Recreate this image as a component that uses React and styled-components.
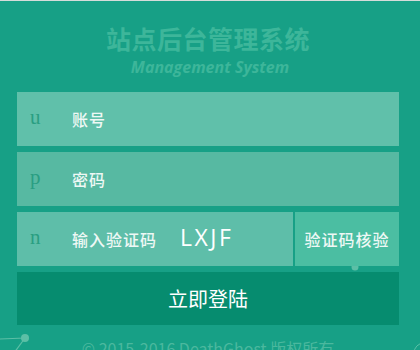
import React from 'react';
import styled, { createGlobalStyle } from 'styled-components';

const GlobalStyle = createGlobalStyle`
	html, body {
		margin: 0;
		padding: 0;
		height: 350px;
		overflow: hidden;
		background: #17a086;
	}
	* {
		box-sizing: border-box;
	}
`;

const Page = styled.div`
	position: relative;
	height: 350px;
	border-top: 1px solid #d6dcda;
	background: #17a086;
	padding: 22px 21px 0 17px;
	font-family: 'Noto Sans CJK SC', 'Noto Sans', sans-serif;
	overflow: hidden;
`;

const Header = styled.div`
	display: flex;
	flex-direction: column;
	align-items: center;
	height: 69px;
`;

const Title = styled.h1`
	margin: 0;
	font-size: 25px;
	line-height: 30px;
	font-weight: 700;
	color: #3db69a;
	letter-spacing: 0.5px;
`;

const Subtitle = styled.div`
	margin-top: 4px;
	font-family: 'Open Sans', 'Noto Sans', sans-serif;
	font-style: italic;
	font-weight: 700;
	font-size: 16px;
	line-height: 20px;
	color: #3db69a;
	padding-left: 4px;
`;

const Form = styled.div`
	position: relative;
	z-index: 1;
	display: flex;
	flex-direction: column;
	gap: 6.5px;
`;

const Row = styled.div`
	display: flex;
	gap: 2px;
	height: 53.5px;
`;

const Field = styled.div`
	flex: 1;
	display: flex;
	align-items: center;
	background: ${(p) => p.$bg || '#5ebea9'};
	padding-left: 13px;
`;

const Icon = styled.span`
	width: 42px;
	font-family: 'Liberation Serif', serif;
	font-size: 21px;
	color: #2a9e82;
	line-height: 1;
	margin-top: -2px;
`;

const Placeholder = styled.span`
	font-size: 16px;
	font-weight: 500;
	letter-spacing: 1px;
	color: #eef8f5;
`;

const Captcha = styled.span`
	margin-left: 23px;
	font-family: 'Open Sans', 'Liberation Sans', sans-serif;
	font-size: 23px;
	letter-spacing: 2.5px;
	color: #ffffff;
	margin-top: -3px;
`;

const VerifyButton = styled.button`
	width: 104px;
	border: none;
	background: #4bbea2;
	color: #eef8f5;
	font-family: 'Noto Sans CJK SC', sans-serif;
	font-size: 16px;
	font-weight: 500;
	letter-spacing: 1px;
	padding: 0;
	cursor: pointer;
`;

const LoginButton = styled.button`
	height: 53px;
	border: none;
	background: #068c6f;
	color: #ffffff;
	font-family: 'Noto Sans CJK SC', sans-serif;
	font-size: 20px;
	cursor: pointer;
`;

const Footer = styled.div`
	margin-top: 11px;
	text-align: center;
	font-size: 16px;
	color: #4bb89e;
`;

const Particles = styled.svg`
	position: absolute;
	left: 0;
	top: 0;
	width: 420px;
	height: 350px;
	pointer-events: none;
`;

const App = () => {
	return (
		<>
			<GlobalStyle />
			<Page>
				<Particles viewBox='0 0 420 350'>
					<line x1='0' y1='338' x2='25' y2='337' stroke='#5cbfa6' strokeWidth='1.2' />
					<line x1='25' y1='337' x2='14' y2='352' stroke='#5cbfa6' strokeWidth='1.2' />
					<circle cx='25' cy='337' r='4' fill='#5cbfa6' />
					<circle cx='355' cy='266' r='3.5' fill='#5cbfa6' />
					<circle cx='424' cy='352' r='10' fill='none' stroke='#5cbfa6' strokeWidth='1' />
				</Particles>
				<Header>
					<Title>站点后台管理系统</Title>
					<Subtitle>Management System</Subtitle>
				</Header>
				<Form>
					<Row>
						<Field $bg='#60c0aa'>
							<Icon>u</Icon>
							<Placeholder>账号</Placeholder>
						</Field>
					</Row>
					<Row>
						<Field $bg='#57b9a2'>
							<Icon>p</Icon>
							<Placeholder>密码</Placeholder>
						</Field>
					</Row>
					<Row>
						<Field $bg='#5ebea9'>
							<Icon>n</Icon>
							<Placeholder>输入验证码</Placeholder>
							<Captcha>LXJF</Captcha>
						</Field>
						<VerifyButton type='button'>验证码核验</VerifyButton>
					</Row>
					<LoginButton type='button'>立即登陆</LoginButton>
				</Form>
				<Footer>© 2015-2016 DeathGhost 版权所有</Footer>
			</Page>
		</>
	);
};

export default App;
